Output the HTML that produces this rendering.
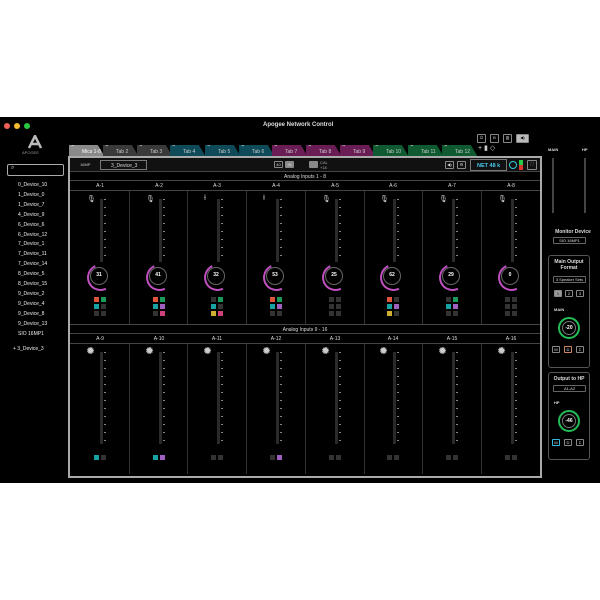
<!DOCTYPE html><html><head><style>
*{margin:0;padding:0;box-sizing:border-box}
body{width:600px;height:600px;background:#fff;position:relative;overflow:hidden;font-family:"Liberation Sans",sans-serif;color:#ddd}
.a{position:absolute}
.win{left:0;top:117px;width:600px;height:366px;background:#000}
.dot{width:6px;height:6px;border-radius:50%;top:123px}
.tab{top:145px;height:12px;font-size:5px;color:#ccc;padding:4px 0 0 13px;clip-path:polygon(0 0,80% 0,100% 100%,0 100%)}
.tab:before{content:"×";position:absolute;left:2px;top:-2px;font-size:6px;color:#fff}
.side{font-size:5px;color:#eee;left:18px}
.lbl{font-size:5px;color:#ddd;text-align:center;width:58px}
.sep{width:1px;background:#333}
.met{width:3px;background:#2a2a2a}
.met:after{content:"";position:absolute;left:4px;top:0;width:2px;height:100%;background:repeating-linear-gradient(#888 0 1px,transparent 1px 8px)}
.knob{width:18px;height:18px;border-radius:50%;border:1.5px solid #666;font-size:5px;color:#fff;text-align:center;line-height:15px;font-weight:bold}
.knob:after{content:"";position:absolute;left:-4px;top:-4px;width:23px;height:23px;border-radius:50%;border:2px solid transparent;border-left-color:#c050c0;border-bottom-color:#c050c0;transform:rotate(20deg)}
.sq{width:5px;height:5px}
.btn{border:1px solid #888;border-radius:1px;font-size:4px;text-align:center;color:#ddd}
.box{border:1px solid #555;border-radius:3px}
</style></head><body>
<div class="a win"></div>
<div class="a dot" style="left:4px;background:#ee5f57"></div>
<div class="a dot" style="left:14px;background:#f4bd2f"></div>
<div class="a dot" style="left:24px;background:#28c840"></div>
<div class="a" style="left:263px;top:122px;font-size:6px;color:#ddd;font-weight:bold">Apogee Network Control</div>
<svg class="a" style="left:27px;top:135px" width="16" height="14"><path d="M2 13 L8 1 L14 13 M5 9 L11 9" stroke="#bbb" stroke-width="2.5" fill="none"/></svg>
<div class="a" style="left:22px;top:150px;font-size:4px;color:#999">APOGEE</div>
<div class="a" style="left:7px;top:164px;width:57px;height:12px;border:1px solid #aaa;border-radius:2px;font-size:6px;padding-left:3px;color:#ccc">⌕</div>
<div class="a side" style="top:182px">0_Device_10</div>
<div class="a side" style="top:192px">1_Device_0</div>
<div class="a side" style="top:202px">1_Device_7</div>
<div class="a side" style="top:212px">4_Device_9</div>
<div class="a side" style="top:222px">6_Device_6</div>
<div class="a side" style="top:232px">6_Device_12</div>
<div class="a side" style="top:241px">7_Device_1</div>
<div class="a side" style="top:251px">7_Device_11</div>
<div class="a side" style="top:261px">7_Device_14</div>
<div class="a side" style="top:271px">8_Device_5</div>
<div class="a side" style="top:281px">8_Device_15</div>
<div class="a side" style="top:291px">9_Device_2</div>
<div class="a side" style="top:301px">9_Device_4</div>
<div class="a side" style="top:311px">9_Device_8</div>
<div class="a side" style="top:321px">9_Device_13</div>
<div class="a side" style="top:331px">SIO 16MP1</div>
<div class="a side" style="top:346px;left:13px">+ 3_Device_3</div>
<div class="a tab" style="left:69px;width:36px;background:#8a8a8a;color:#fff">Mics 1-8</div>
<div class="a tab" style="left:103px;width:36px;background:#3a3a3a">Tab 2</div>
<div class="a tab" style="left:137px;width:36px;background:#3a3a3a">Tab 3</div>
<div class="a tab" style="left:170px;width:36px;background:#0f4a58">Tab 4</div>
<div class="a tab" style="left:205px;width:36px;background:#0f4a58">Tab 5</div>
<div class="a tab" style="left:239px;width:36px;background:#0f4a58">Tab 6</div>
<div class="a tab" style="left:272px;width:36px;background:#6a1d55">Tab 7</div>
<div class="a tab" style="left:306px;width:36px;background:#6a1d55">Tab 8</div>
<div class="a tab" style="left:340px;width:36px;background:#6a1d55">Tab 9</div>
<div class="a tab" style="left:373px;width:36px;background:#0f5a30">Tab 10</div>
<div class="a tab" style="left:408px;width:36px;background:#0f5a30">Tab 11</div>
<div class="a tab" style="left:442px;width:36px;background:#0f5a30">Tab 12</div>
<div class="a btn" style="left:477px;top:134px;width:9px;height:9px">⏻</div>
<div class="a btn" style="left:490px;top:134px;width:9px;height:9px">B</div>
<div class="a btn" style="left:503px;top:134px;width:9px;height:9px">▥</div>
<div class="a btn" style="left:516px;top:134px;width:13px;height:9px;background:#bbb;color:#000">◀)</div>
<div class="a" style="left:478px;top:144px;font-size:7px;color:#ccc">+ ▮ ◇</div>
<div class="a" style="left:68px;top:156px;width:474px;height:322px;border:2px solid #aaa;background:#000"></div>
<div class="a" style="left:70px;top:158px;width:470px;height:14px;background:#111;border-bottom:1px solid #444"></div>
<div class="a" style="left:80px;top:162px;font-size:4px;color:#ccc">16MP</div>
<div class="a" style="left:100px;top:160px;width:47px;height:10px;border:1px solid #777;font-size:5px;padding:2px 0 0 10px">3_Device_3</div>
<div class="a btn" style="left:274px;top:161px;width:9px;height:7px">40</div>
<div class="a btn" style="left:285px;top:161px;width:9px;height:7px;background:#888">IN</div>
<div class="a btn" style="left:309px;top:161px;width:9px;height:7px;background:#888"></div>
<div class="a" style="left:320px;top:160px;font-size:4px;color:#aaa">CAL<br>+18</div>
<div class="a btn" style="left:445px;top:161px;width:9px;height:8px">◀)</div>
<div class="a btn" style="left:457px;top:161px;width:9px;height:8px">⚙</div>
<div class="a" style="left:470px;top:159px;width:37px;height:12px;border:1px solid #777;font-size:5.5px;color:#4ce;font-weight:bold;padding:3px 0 0 6px">NET 48 k</div>
<div class="a" style="left:509px;top:161px;width:8px;height:8px;border-radius:50%;border:1.5px solid #3cd"></div>
<div class="a" style="left:519px;top:160px;width:4px;height:10px;background:linear-gradient(#2c4 50%,#d33 50%)"></div>
<div class="a btn" style="left:527px;top:160px;width:10px;height:10px">⛶</div>
<div class="a" style="left:70px;top:172px;width:470px;height:9px;border-bottom:1px solid #444;font-size:5px;text-align:center;padding-top:2px">Analog Inputs 1 - 8</div>
<div class="a" style="left:70px;top:181px;width:470px;height:10px;border-bottom:1px solid #444"></div>
<div class="a" style="left:70px;top:324px;width:470px;height:10px;border-top:1px solid #444;border-bottom:1px solid #444;font-size:5px;text-align:center;padding-top:2px">Analog Inputs 9 - 16</div>
<div class="a" style="left:70px;top:334px;width:470px;height:10px;border-bottom:1px solid #444"></div>
<div class="a sep" style="left:129px;top:191px;height:133px"></div><div class="a sep" style="left:187px;top:191px;height:133px"></div><div class="a sep" style="left:246px;top:191px;height:133px"></div><div class="a sep" style="left:305px;top:191px;height:133px"></div><div class="a sep" style="left:364px;top:191px;height:133px"></div><div class="a sep" style="left:422px;top:191px;height:133px"></div><div class="a sep" style="left:481px;top:191px;height:133px"></div>
<div class="a sep" style="left:129px;top:344px;height:130px"></div><div class="a sep" style="left:187px;top:344px;height:130px"></div><div class="a sep" style="left:246px;top:344px;height:130px"></div><div class="a sep" style="left:305px;top:344px;height:130px"></div><div class="a sep" style="left:364px;top:344px;height:130px"></div><div class="a sep" style="left:422px;top:344px;height:130px"></div><div class="a sep" style="left:481px;top:344px;height:130px"></div>
<div class="a lbl" style="left:71px;top:183px">A-1</div><div class="a lbl" style="left:130px;top:183px">A-2</div><div class="a lbl" style="left:188px;top:183px">A-3</div><div class="a lbl" style="left:247px;top:183px">A-4</div><div class="a lbl" style="left:306px;top:183px">A-5</div><div class="a lbl" style="left:364px;top:183px">A-6</div><div class="a lbl" style="left:423px;top:183px">A-7</div><div class="a lbl" style="left:482px;top:183px">A-8</div>
<div class="a lbl" style="left:71px;top:336px">A-9</div><div class="a lbl" style="left:130px;top:336px">A-10</div><div class="a lbl" style="left:188px;top:336px">A-11</div><div class="a lbl" style="left:247px;top:336px">A-12</div><div class="a lbl" style="left:306px;top:336px">A-13</div><div class="a lbl" style="left:364px;top:336px">A-14</div><div class="a lbl" style="left:423px;top:336px">A-15</div><div class="a lbl" style="left:482px;top:336px">A-16</div>
<div class="a met" style="left:100px;top:199px;height:63px"></div><div class="a met" style="left:159px;top:199px;height:63px"></div><div class="a met" style="left:217px;top:199px;height:63px"></div><div class="a met" style="left:276px;top:199px;height:63px"></div><div class="a met" style="left:335px;top:199px;height:63px"></div><div class="a met" style="left:393px;top:199px;height:63px"></div><div class="a met" style="left:452px;top:199px;height:63px"></div><div class="a met" style="left:511px;top:199px;height:63px"></div>
<div class="a" style="left:87px;top:195px;font-size:7px;color:#ccc">🎙</div><div class="a" style="left:146px;top:195px;font-size:7px;color:#ccc">🎙</div><div class="a" style="left:204px;top:195px;font-size:7px;color:#ccc">Ɨ</div><div class="a" style="left:263px;top:195px;font-size:7px;color:#ccc">Ɨ</div><div class="a" style="left:322px;top:195px;font-size:7px;color:#ccc">🎙</div><div class="a" style="left:380px;top:195px;font-size:7px;color:#ccc">🎙</div><div class="a" style="left:439px;top:195px;font-size:7px;color:#ccc">🎙</div><div class="a" style="left:498px;top:195px;font-size:7px;color:#ccc">🎙</div>
<div class="a knob" style="left:90px;top:267px">31</div><div class="a knob" style="left:149px;top:267px">41</div><div class="a knob" style="left:207px;top:267px">32</div><div class="a knob" style="left:266px;top:267px">53</div><div class="a knob" style="left:325px;top:267px">25</div><div class="a knob" style="left:383px;top:267px">62</div><div class="a knob" style="left:442px;top:267px">29</div><div class="a knob" style="left:501px;top:267px">0</div>
<div class="a" style="left:94px;top:297px;width:13px;display:grid;grid-template-columns:5px 5px;gap:2px"><i class="sq" style="background:#e0553a"></i><i class="sq" style="background:#1a9a5a"></i><i class="sq" style="background:#17a3a3"></i><i class="sq" style="background:#333"></i><i class="sq" style="background:#333"></i><i class="sq" style="background:#333"></i></div>
<div class="a" style="left:153px;top:297px;width:13px;display:grid;grid-template-columns:5px 5px;gap:2px"><i class="sq" style="background:#e0553a"></i><i class="sq" style="background:#1a9a5a"></i><i class="sq" style="background:#17a3a3"></i><i class="sq" style="background:#a060c0"></i><i class="sq" style="background:#333"></i><i class="sq" style="background:#d0407a"></i></div>
<div class="a" style="left:211px;top:297px;width:13px;display:grid;grid-template-columns:5px 5px;gap:2px"><i class="sq" style="background:#333"></i><i class="sq" style="background:#1a9a5a"></i><i class="sq" style="background:#17a3a3"></i><i class="sq" style="background:#333"></i><i class="sq" style="background:#d0b030"></i><i class="sq" style="background:#d0407a"></i></div>
<div class="a" style="left:270px;top:297px;width:13px;display:grid;grid-template-columns:5px 5px;gap:2px"><i class="sq" style="background:#e0553a"></i><i class="sq" style="background:#1a9a5a"></i><i class="sq" style="background:#17a3a3"></i><i class="sq" style="background:#a060c0"></i><i class="sq" style="background:#333"></i><i class="sq" style="background:#333"></i></div>
<div class="a" style="left:329px;top:297px;width:13px;display:grid;grid-template-columns:5px 5px;gap:2px"><i class="sq" style="background:#333"></i><i class="sq" style="background:#333"></i><i class="sq" style="background:#333"></i><i class="sq" style="background:#333"></i><i class="sq" style="background:#333"></i><i class="sq" style="background:#333"></i></div>
<div class="a" style="left:387px;top:297px;width:13px;display:grid;grid-template-columns:5px 5px;gap:2px"><i class="sq" style="background:#e0553a"></i><i class="sq" style="background:#333"></i><i class="sq" style="background:#17a3a3"></i><i class="sq" style="background:#a060c0"></i><i class="sq" style="background:#d0b030"></i><i class="sq" style="background:#333"></i></div>
<div class="a" style="left:446px;top:297px;width:13px;display:grid;grid-template-columns:5px 5px;gap:2px"><i class="sq" style="background:#333"></i><i class="sq" style="background:#1a9a5a"></i><i class="sq" style="background:#17a3a3"></i><i class="sq" style="background:#a060c0"></i><i class="sq" style="background:#333"></i><i class="sq" style="background:#333"></i></div>
<div class="a" style="left:505px;top:297px;width:13px;display:grid;grid-template-columns:5px 5px;gap:2px"><i class="sq" style="background:#333"></i><i class="sq" style="background:#333"></i><i class="sq" style="background:#333"></i><i class="sq" style="background:#333"></i><i class="sq" style="background:#333"></i><i class="sq" style="background:#333"></i></div>
<div class="a met" style="left:100px;top:352px;height:92px"></div><div class="a met" style="left:159px;top:352px;height:92px"></div><div class="a met" style="left:217px;top:352px;height:92px"></div><div class="a met" style="left:276px;top:352px;height:92px"></div><div class="a met" style="left:335px;top:352px;height:92px"></div><div class="a met" style="left:393px;top:352px;height:92px"></div><div class="a met" style="left:452px;top:352px;height:92px"></div><div class="a met" style="left:511px;top:352px;height:92px"></div>
<div class="a" style="left:87px;top:347px;width:7px;height:7px;border-radius:50%;background:#ccc;border:1.5px dotted #333"></div><div class="a" style="left:146px;top:347px;width:7px;height:7px;border-radius:50%;background:#ccc;border:1.5px dotted #333"></div><div class="a" style="left:204px;top:347px;width:7px;height:7px;border-radius:50%;background:#ccc;border:1.5px dotted #333"></div><div class="a" style="left:263px;top:347px;width:7px;height:7px;border-radius:50%;background:#ccc;border:1.5px dotted #333"></div><div class="a" style="left:322px;top:347px;width:7px;height:7px;border-radius:50%;background:#ccc;border:1.5px dotted #333"></div><div class="a" style="left:380px;top:347px;width:7px;height:7px;border-radius:50%;background:#ccc;border:1.5px dotted #333"></div><div class="a" style="left:439px;top:347px;width:7px;height:7px;border-radius:50%;background:#ccc;border:1.5px dotted #333"></div><div class="a" style="left:498px;top:347px;width:7px;height:7px;border-radius:50%;background:#ccc;border:1.5px dotted #333"></div>
<div class="a sq" style="left:94px;top:455px;background:#17a3a3"></div><div class="a sq" style="left:101px;top:455px;background:#333"></div>
<div class="a sq" style="left:153px;top:455px;background:#17a3a3"></div><div class="a sq" style="left:160px;top:455px;background:#a060c0"></div>
<div class="a sq" style="left:211px;top:455px;background:#333"></div><div class="a sq" style="left:218px;top:455px;background:#333"></div>
<div class="a sq" style="left:270px;top:455px;background:#333"></div><div class="a sq" style="left:277px;top:455px;background:#a060c0"></div>
<div class="a sq" style="left:329px;top:455px;background:#333"></div><div class="a sq" style="left:336px;top:455px;background:#333"></div>
<div class="a sq" style="left:387px;top:455px;background:#333"></div><div class="a sq" style="left:394px;top:455px;background:#333"></div>
<div class="a sq" style="left:446px;top:455px;background:#333"></div><div class="a sq" style="left:453px;top:455px;background:#333"></div>
<div class="a sq" style="left:505px;top:455px;background:#333"></div><div class="a sq" style="left:512px;top:455px;background:#333"></div>
<div class="a" style="left:548px;top:147px;font-size:4px;font-weight:bold">MAIN</div>
<div class="a" style="left:582px;top:147px;font-size:4px;font-weight:bold">HP</div>
<div class="a" style="left:552px;top:158px;height:55px;width:2px;background:#444"></div>
<div class="a" style="left:584px;top:158px;height:55px;width:2px;background:#444"></div>
<div class="a" style="left:546px;top:229px;width:54px;text-align:center;font-size:5px;font-weight:bold">Monitor Device</div>
<div class="a btn" style="left:553px;top:237px;width:33px;height:7px;border-color:#666">SIO 16MP1</div>
<div class="a box" style="left:548px;top:255px;width:42px;height:113px"></div>
<div class="a" style="left:548px;top:259px;width:42px;text-align:center;font-size:5px;font-weight:bold">Main Output<br>Format</div>
<div class="a btn" style="left:553px;top:276px;width:33px;height:7px;border-color:#666">3 Speaker Sets</div>
<div class="a btn" style="left:554px;top:290px;width:8px;height:7px;background:#999;color:#000">1</div>
<div class="a btn" style="left:565px;top:290px;width:8px;height:7px">2</div>
<div class="a btn" style="left:576px;top:290px;width:8px;height:7px">3</div>
<div class="a" style="left:554px;top:307px;font-size:4px;font-weight:bold">MAIN</div>
<div class="a" style="left:558px;top:317px;width:22px;height:22px;border-radius:50%;border:2px solid #2b5;font-size:5px;text-align:center;line-height:18px;color:#fff;font-weight:bold;box-shadow:inset 0 0 0 2px #000,inset 0 0 0 3px #777">-20</div>
<div class="a btn" style="left:552px;top:346px;width:8px;height:7px">M</div>
<div class="a btn" style="left:564px;top:346px;width:8px;height:7px;border-color:#c86">D</div>
<div class="a btn" style="left:576px;top:346px;width:8px;height:7px">Σ</div>
<div class="a box" style="left:548px;top:372px;width:42px;height:88px"></div>
<div class="a" style="left:548px;top:376px;width:42px;text-align:center;font-size:5px;font-weight:bold">Output to HP</div>
<div class="a btn" style="left:553px;top:385px;width:33px;height:7px;border-color:#666">A1-A2</div>
<div class="a" style="left:554px;top:400px;font-size:4px;font-weight:bold">HP</div>
<div class="a" style="left:558px;top:410px;width:22px;height:22px;border-radius:50%;border:2px solid #2b5;font-size:5px;text-align:center;line-height:18px;color:#fff;font-weight:bold;box-shadow:inset 0 0 0 2px #000,inset 0 0 0 3px #777">-46</div>
<div class="a btn" style="left:552px;top:439px;width:8px;height:7px;border-color:#3bd">M</div>
<div class="a btn" style="left:564px;top:439px;width:8px;height:7px">D</div>
<div class="a btn" style="left:576px;top:439px;width:8px;height:7px">Σ</div>
</body></html>
